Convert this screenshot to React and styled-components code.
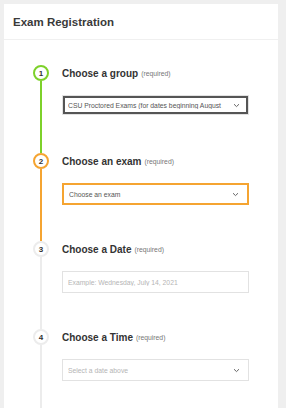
import styled, { createGlobalStyle } from "styled-components";

const GlobalStyle = createGlobalStyle`
    html, body {
        margin: 0;
        padding: 0;
        background: #efefef;
        font-family: "Liberation Sans", Arial, sans-serif;
    }
`

const Card = styled.div`
    margin: 4px 8px 0 4px;
    background: #ffffff;
    min-height: 404px;
`

const Header = styled.div`
    height: 35px;
    display: flex;
    align-items: center;
    padding: 0 0 0 9px;
    border-bottom: 1px solid #f0f0f0;

    font-size: 11.5px;
    font-weight: bold;
    color: #3a3a3a;
`

const Body = styled.div`
    padding: 25px 29px 0 29px;
`

const Step = styled.div`
    display: flex;
    column-gap: 13px;
    min-height: 88px;
`

const Rail = styled.div`
    width: 16px;
    display: flex;
    flex-direction: column;
    align-items: center;
`

const Circle = styled.div`
    box-sizing: border-box;
    width: 16px;
    height: 16px;
    border-radius: 50%;
    border: 2px solid ${(p) => p.color || "#ececec"};
    background: #ffffff;

    display: flex;
    align-items: center;
    justify-content: center;

    font-size: 8px;
    font-weight: bold;
    color: #333333;
`

const Line = styled.div`
    flex: 1;
    width: 2px;
    background: ${(p) => p.color || "#ececec"};
`

const Content = styled.div`
    flex: 1;
    min-width: 0;
`

const Heading = styled.div`
    height: 16px;
    display: flex;
    align-items: center;
    margin-bottom: 14px;

    font-size: 10px;
    font-weight: bold;
    color: #333333;

    span {
        margin-left: 3px;
        font-size: 6.8px;
        font-weight: normal;
        color: #777777;
    }
`

const Field = styled.div`
    box-sizing: border-box;
    height: ${(p) => p.h || 20}px;
    display: flex;
    align-items: center;
    padding: 0 8px 0 5px;
    background: #ffffff;
    border: 1px solid #e2e2e2;

    font-size: 6.8px;
    color: ${(p) => (p.muted ? "#b5b5b5" : "#555555")};
    white-space: nowrap;
`

const FocusField = styled(Field)`
    box-shadow: inset 0 0 0 2px #555555;
`

const ActiveField = styled(Field)`
    border: 2px solid #f5a431;
`

const FieldText = styled.div`
    flex: 1;
    min-width: 0;
    overflow: hidden;
    margin-right: 10px;
`

const Chevron = () => (
    <svg width="7" height="5" viewBox="0 0 7 5">
        <path d="M1 1.2 L3.5 3.6 L6 1.2" fill="none" stroke="#666" strokeWidth="1" />
    </svg>
)

const App = () => {
    return (
        <>
            <GlobalStyle />
            <Card>
                <Header>Exam Registration</Header>
                <Body>
                    <Step>
                        <Rail>
                            <Circle color="#7dd12a">1</Circle>
                            <Line color="#7dd12a" />
                        </Rail>
                        <Content>
                            <Heading>Choose a group<span>(required)</span></Heading>
                            <FocusField>
                                <FieldText>CSU Proctored Exams (for dates beginning August 24, 2021)</FieldText>
                                <Chevron />
                            </FocusField>
                        </Content>
                    </Step>
                    <Step>
                        <Rail>
                            <Circle color="#f5a431">2</Circle>
                            <Line color="#f5a431" />
                        </Rail>
                        <Content>
                            <Heading>Choose an exam<span>(required)</span></Heading>
                            <ActiveField h={22}>
                                <FieldText>Choose an exam</FieldText>
                                <Chevron />
                            </ActiveField>
                        </Content>
                    </Step>
                    <Step>
                        <Rail>
                            <Circle>3</Circle>
                            <Line />
                        </Rail>
                        <Content>
                            <Heading>Choose a Date<span>(required)</span></Heading>
                            <Field muted h={22}>
                                <FieldText>Example: Wednesday, July 14, 2021</FieldText>
                            </Field>
                        </Content>
                    </Step>
                    <Step>
                        <Rail>
                            <Circle>4</Circle>
                            <Line />
                        </Rail>
                        <Content>
                            <Heading>Choose a Time<span>(required)</span></Heading>
                            <Field muted h={22}>
                                <FieldText>Select a date above</FieldText>
                                <Chevron />
                            </Field>
                        </Content>
                    </Step>
                </Body>
            </Card>
        </>
    );
}

export default App;
